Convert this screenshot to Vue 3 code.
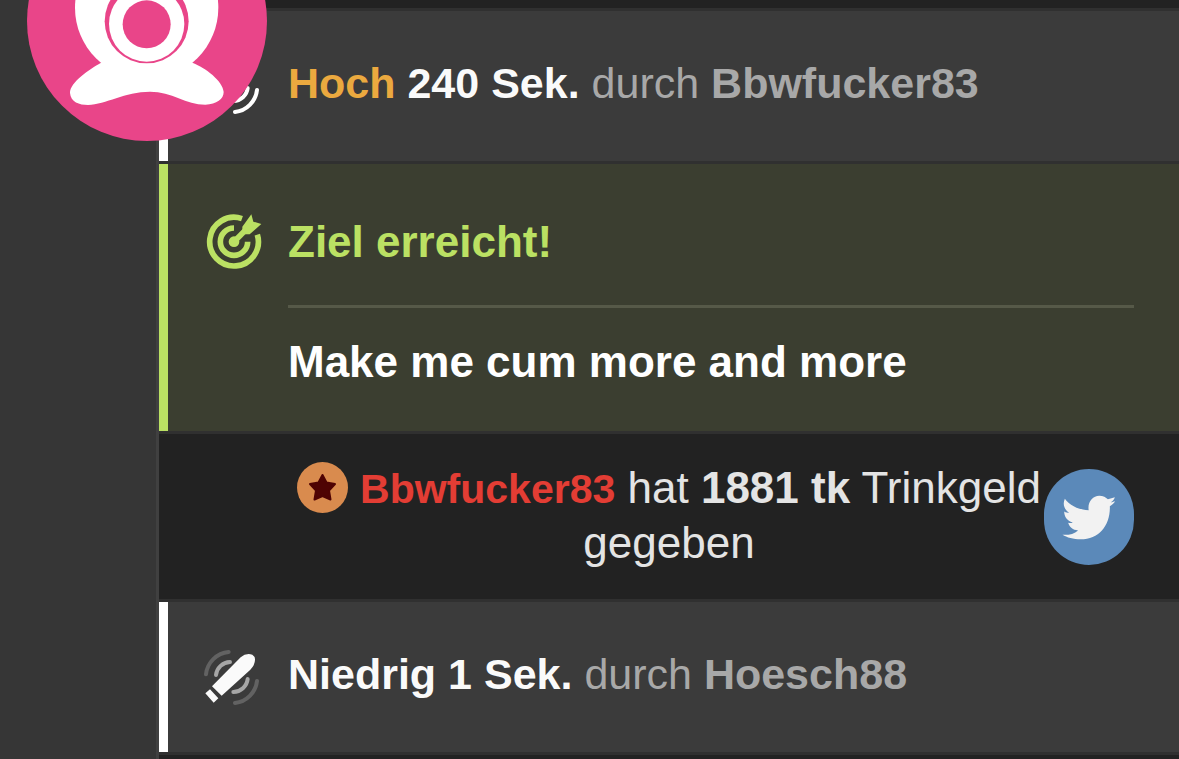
<script setup>
const arcs = [
  { d: 'M47 101 A75 75 0 0 1 115 34', level: 'outer' },
  { d: 'M77 103 A44 44 0 0 1 119 64', level: 'inner' },
  { d: 'M172 115 A44 44 0 0 1 129 154', level: 'inner' },
  { d: 'M200 121 A75 75 0 0 1 134 187', level: 'outer' },
]
const before = [{ id: 1, level: 'Hoch', time: '240 Sek.', user: 'Bbwfucker83', high: true }]
const after = [{ id: 2, level: 'Niedrig', time: '1 Sek.', user: 'Hoesch88', high: false }]
</script>

<template>
  <main class="page">
    <aside class="side"></aside>
    <section class="feed" aria-label="Chat">
      <article v-for="m in before" :key="m.id" class="row toy">
        <svg class="icon" :class="{ high: m.high }" viewBox="41 28 165 165" aria-hidden="true">
          <path v-for="a in arcs" :key="a.d" :d="a.d" class="arc" :class="a.level" />
          <path class="solid" d="M65 137 L151 50 Q167 36 186 42 Q200 50 190 74 Q187 80 180 87 L94 165Z M45 158 L59 146 L84 173 L70 186Z" />
        </svg>
        <p class="text"><b :class="{ orange: m.high }">{{ m.level }}</b> <b>{{ m.time }}</b> <span class="muted">durch <b>{{ m.user }}</b></span></p>
      </article>

      <article class="row goal">
        <svg class="icon" viewBox="12 27 165 165" aria-hidden="true">
          <g class="ring">
            <path d="M126 38 A73 73 0 1 0 172 86" />
            <path d="M102 66 A41 41 0 1 0 143 107" />
            <path d="M102 107 L142 67" />
          </g>
          <circle cx="102" cy="107" r="16" class="solid" />
          <path class="solid" d="M127 62 L154 25 L160 47 L184 54 L149 85 L135 85 L127 77Z" />
        </svg>
        <div class="body">
          <h2>Ziel erreicht!</h2>
          <p>Make me cum more and more</p>
        </div>
      </article>

      <article class="row tip">
        <p class="text">
          <svg class="badge" viewBox="0 0 51 51" aria-hidden="true">
            <circle cx="25.5" cy="25.5" r="25.5" fill="#d98b4e" />
            <path d="M25.5 13 L29.5 20.5 L38 22 L32 28.5 L33.5 37.5 L25.5 34 L17.5 37.5 L19 28.5 L13 22 L21.5 20.5Z" fill="#4f0303" stroke="#4f0303" stroke-width="2" stroke-linejoin="round" />
          </svg>
          <b class="name">Bbwfucker83</b> <span>hat</span> <b>1881 tk</b> <span>Trinkgeld</span> <span>gegeben</span>
        </p>
        <button class="share" type="button" aria-label="Twitter">
          <svg viewBox="22 27 162 136" aria-hidden="true">
            <path fill="#f2f2f2" d="M30 38 C45 58 70 71 102 73 C98 48 114 29 134 29 C146 29 154 34 160 40 C168 38 174 36 181 34 C179 40 176 45 169 49 C174 49 178 47 182 46 C179 51 174 56 166 61 C168 118 134 161 78 161 C56 161 36 155 23 147 C42 148 58 145 70 134 C54 133 44 124 40 111 C46 112 50 112 54 110 C36 105 28 92 28 77 C33 80 38 81 43 81 C27 70 23 54 30 38Z" />
          </svg>
        </button>
      </article>

      <article v-for="m in after" :key="m.id" class="row toy">
        <svg class="icon" :class="{ high: m.high }" viewBox="41 28 165 165" aria-hidden="true">
          <path v-for="a in arcs" :key="a.d" :d="a.d" class="arc" :class="a.level" />
          <path class="solid" d="M65 137 L151 50 Q167 36 186 42 Q200 50 190 74 Q187 80 180 87 L94 165Z M45 158 L59 146 L84 173 L70 186Z" />
        </svg>
        <p class="text"><b :class="{ orange: m.high }">{{ m.level }}</b> <b>{{ m.time }}</b> <span class="muted">durch <b>{{ m.user }}</b></span></p>
      </article>
    </section>

    <svg class="webcam" viewBox="81 -297 720 720" aria-hidden="true">
      <circle cx="441" cy="63" r="360" fill="#e94589" />
      <circle cx="440" cy="23" r="215" fill="#fff" />
      <path fill="#fff" d="M302 189 C270 207 210 246 210 279 C212 306 238 315 264 315 C318 313 374 275 450 275 C516 275 558 314 616 314 C650 312 671 298 671 276 C669 243 615 203 579 189 Q440 120 302 189Z" />
      <circle cx="440" cy="64" r="126" fill="#e94589" />
      <circle cx="440" cy="72" r="113" fill="#fff" />
      <circle cx="440" cy="73" r="72" fill="#e94589" />
    </svg>
  </main>
</template>

<style>
body {
  margin: 0;
  background: #222;
}
</style>

<style scoped>
.page {
  position: relative;
  display: flex;
  min-height: 100vh;
  overflow: hidden;
  background: #222;
  color: #fafafa;
  font-family: "Liberation Sans", Arial, sans-serif;
  font-size: 43px;
  line-height: 54px;
}
.side {
  box-sizing: border-box;
  flex: 0 0 159px;
  background: #363636;
  border-right: 3px solid #404040;
}
.feed {
  flex: 1;
  min-width: 0;
  padding-top: 8px;
}
h2,
p {
  margin: 0;
  font-size: inherit;
}
.row {
  position: relative;
  display: flex;
  align-items: flex-start;
  gap: 29px;
  border-top: 3px solid #303030;
}
.row:last-child {
  border-bottom: 3px solid #303030;
}
.toy {
  padding: 45px 45px 47px;
  background: #3b3b3b;
  background-clip: padding-box;
  box-shadow: inset 9px 0 #fff;
}
.icon {
  flex: none;
  width: 55px;
  height: 55px;
  overflow: visible;
}
.toy .icon {
  margin-top: 3px;
}
.arc {
  fill: none;
  stroke: #fff;
  stroke-width: 12;
  stroke-linecap: round;
}
.outer {
  opacity: 0.2;
}
.inner {
  opacity: 0.55;
}
.high .arc {
  opacity: 1;
}
.solid {
  fill: currentColor;
}
.orange {
  color: #eba93f;
}
.muted {
  color: #a8a8a8;
}
.goal {
  padding: 51px 45px 42px;
  background: #3b3e30;
  background-clip: padding-box;
  box-shadow: inset 9px 0 #bbe163;
  color: #bbe163;
  font-size: 44px;
}
.body {
  flex: 1;
}
.body h2 {
  padding-bottom: 36px;
  border-bottom: 3px solid #565948;
}
.body p {
  padding-top: 27px;
  color: #fff;
  font-weight: bold;
}
.ring {
  fill: none;
  stroke: currentColor;
  stroke-width: 17;
}
.tip {
  padding: 27px 130px 29px;
  color: #e4e4e4;
  font-size: 44px;
}
.tip .text {
  flex: 1;
  text-align: center;
}
.badge {
  width: 51px;
  height: 51px;
  margin-right: 12px;
  vertical-align: -10px;
}
.name {
  color: #e33d34;
  font-size: 41px;
}
.share {
  position: absolute;
  top: 35px;
  right: 45px;
  display: grid;
  place-items: center;
  width: 90px;
  height: 96px;
  padding: 0;
  border: 0;
  border-radius: 45px;
  background: #5b89b9;
}
.share svg {
  width: 54px;
  height: 45px;
}
.webcam {
  position: absolute;
  top: -99px;
  left: 27px;
  width: 240px;
  height: 240px;
}
</style>
